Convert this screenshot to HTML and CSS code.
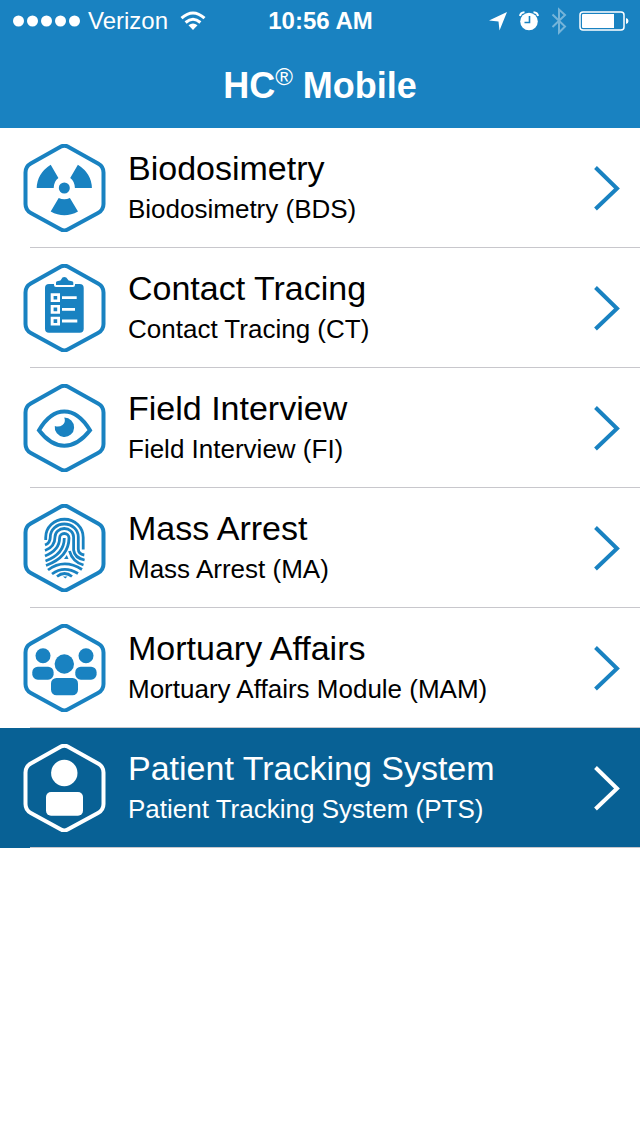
FILE: index.html
```html
<!DOCTYPE html>
<html lang="en">
<head>
<meta charset="utf-8">
<meta name="viewport" content="width=device-width">
<title>HC® Mobile</title>
<link rel="stylesheet" href="styles.css">
</head>
<body>
<svg class="defs" aria-hidden="true">
  <symbol id="hex" viewBox="0 0 88 88"><path d="M41 2.6Q44.3.8 47.6 2.6L78 19.5Q83.500 22.500 83.500 28.500V60Q83.500 66 78 69L47.600 85.600Q44.300 87.400 41 85.600L10.800 69Q5.500 66 5.500 60V28.500Q5.500 22.500 10.800 19.500Z" fill="none" stroke="currentColor" stroke-width="4"/></symbol>
  <symbol id="chevron" viewBox="0 0 28 46"><path d="M3.500 2.500 25 23.500 3.500 44" fill="none" stroke="currentColor" stroke-width="4"/></symbol>
</svg>
<header class="top">
  <div class="status">
    <div class="carrier">
      <svg class="signal" width="68" height="12" viewBox="0 0 68 12" fill="currentColor"><circle cx="6.500" cy="6" r="5.500"/><circle cx="20.500" cy="6" r="5.500"/><circle cx="34.500" cy="6" r="5.500"/><circle cx="48.500" cy="6" r="5.500"/><circle cx="62.500" cy="6" r="5.500"/></svg>
      <span>Verizon</span>
      <svg width="26" height="20" viewBox="0 0 26 20"><g fill="none" stroke="currentColor" stroke-width="3"><path d="M1.500 7.200Q13-3.200 24.500 7.200"/><path d="M5.600 11.500Q13 5 20.400 11.500"/></g><path d="M8.500 14.300Q13 10.700 17.500 14.300L13 19Z" fill="currentColor"/></svg>
    </div>
    <time class="time">10:56 AM</time>
    <div class="indicators">
      <svg width="18" height="20" viewBox="0 0 18 20"><path d="M0 9.500 18 1 10.500 19.500 9.500 10.500Z" fill="currentColor"/></svg>
      <svg width="20" height="20" viewBox="0 0 20 20"><circle cx="10" cy="10.500" r="8.800" fill="currentColor"/><path d="M1 5Q1.500 1.500 5.500 1.200M14.500 1.200Q18.500 1.500 19 5" fill="none" stroke="currentColor" stroke-width="2"/><path class="hands" d="M10.500 5v6.500H5.500" fill="none" stroke-width="1.600"/></svg>
      <svg class="bluetooth" width="16" height="28" viewBox="0 0 16 28"><path d="M1.500 7.500 14 19.500 8 25.500V2.500L14 8 1.500 20" fill="none" stroke="currentColor" stroke-width="2"/></svg>
      <svg width="50" height="20" viewBox="0 0 50 20"><rect x="1" y="1" width="44" height="18" rx="3" fill="none" stroke="currentColor" stroke-width="1.500"/><path d="M3 4q0-1 1-1H35V17H4q-1 0-1-1ZM47 7q2.500.5 2.500 3T47 13Z" fill="currentColor"/></svg>
    </div>
  </div>
  <h1 class="title">HC<sup>®</sup> Mobile</h1>
</header>
<main>
  <ul class="modules">
    <li><a class="row" href="#bds">
      <svg class="icon" viewBox="0 0 88 88"><use href="#hex"/><g fill="currentColor"><circle cx="44.300" cy="44" r="5.500"/><path d="M16.700 44Q17 29.500 30.700 20.700L38.400 34Q34 37 33.700 44ZM71.900 44Q71.600 29.500 57.900 20.700L50.200 34Q54.600 37 54.900 44ZM38.700 54Q44.300 56.500 49.900 54L58 67.500Q44.300 75 30.700 67.500Z"/></g></svg>
      <span class="text"><span class="name">Biodosimetry</span><span class="detail">Biodosimetry (BDS)</span></span>
      <svg class="chevron"><use href="#chevron"/></svg></a></li>
    <li><a class="row" href="#ct">
      <svg class="icon" viewBox="0 0 88 88"><use href="#hex"/><rect x="25" y="20" width="38.700" height="48.700" rx="4" fill="currentColor"/><path d="M34 18H55V21Q55 23 53 23H36Q34 23 34 21Z" fill="#fff"/><path d="M36 21V18.500Q36 17 38 17Q41 17 41.500 15Q42 13 44.300 13T47.500 15Q48 17 51 17Q53.300 17 53.300 18.500V21Z" fill="currentColor"/><path d="M30.700 29.300h9.300v8.700h-9.300zm2.900 2.600v3.600h3.600v-3.600zM30.700 41h9.300v8.700h-9.300zm2.900 2.600v3.600h3.600v-3.600zM30.700 52.700h9.300v8.700h-9.300zm2.900 2.600v3.600h3.600v-3.600z" fill="#fff" fill-rule="evenodd"/><path d="M42 33.700H56.700M42 45.300H55M42 57H57.300" stroke="#fff" stroke-width="2.800"/></svg>
      <span class="text"><span class="name">Contact Tracing</span><span class="detail">Contact Tracing (CT)</span></span>
      <svg class="chevron"><use href="#chevron"/></svg></a></li>
    <li><a class="row" href="#fi">
      <svg class="icon" viewBox="0 0 88 88"><use href="#hex"/><path d="M19 46.300Q30 27.500 44.300 27.500T70 46.300Q58 61.700 44.300 61.700T19 46.300Z" fill="none" stroke="currentColor" stroke-width="4"/><path d="M44.300 33.600A9.700 9.700 0 1 1 34.800 42Q39 43.500 42.500 41T44.300 33.600Z" fill="currentColor"/></svg>
      <span class="text"><span class="name">Field Interview</span><span class="detail">Field Interview (FI)</span></span>
      <svg class="chevron"><use href="#chevron"/></svg></a></li>
    <li><a class="row" href="#ma">
      <svg class="icon" viewBox="0 0 88 88"><use href="#hex"/><g fill="none" stroke="currentColor" stroke-width="2.800"><path d="M25.700 36V33.500a18.600 18.100 0 0 1 37.500 0V45.500"/><path d="M25 41Q30.300 39 30.300 33a14 13 0 0 1 28 0V45q0 5 6 6"/><path d="M25 46.500Q35 43 35 33a9.300 8.500 0 0 1 18.600 0V46q1 8 11 10"/><path d="M25 52Q39.600 46 39.600 34a4.700 4.500 0 0 1 9.400 0Q49 53 26 61.500"/><path d="M25.500 57Q44.300 50 44.300 34"/><path d="M49.500 47Q52.500 58 63.500 61"/><path d="M28 66Q44 54 62 65.500"/><path d="M32 70Q44 61 58 69.500"/><path d="M37 72.500Q44.500 66.500 52 72.500"/></g><path d="M44 55 46.800 51 48.500 55ZM43 72.500H47.500L45.300 74.500Z" fill="currentColor"/></svg>
      <span class="text"><span class="name">Mass Arrest</span><span class="detail">Mass Arrest (MA)</span></span>
      <svg class="chevron"><use href="#chevron"/></svg></a></li>
    <li><a class="row" href="#mam">
      <svg class="icon" viewBox="0 0 88 88"><use href="#hex"/><g fill="currentColor"><circle cx="23" cy="31.700" r="7.500"/><circle cx="66" cy="31.700" r="7.500"/><circle cx="44.300" cy="40" r="9.700"/><rect x="12.300" y="42.700" width="21.300" height="13" rx="5.500"/><rect x="55.300" y="42.700" width="21.300" height="13" rx="5.500"/></g><rect x="30" y="53" width="29" height="19.300" rx="6.500" fill="#fff"/><rect x="31" y="54" width="27" height="17.300" rx="5.500" fill="currentColor"/></svg>
      <span class="text"><span class="name">Mortuary Affairs</span><span class="detail">Mortuary Affairs Module (MAM)</span></span>
      <svg class="chevron"><use href="#chevron"/></svg></a></li>
    <li><a class="row selected" href="#pts" aria-current="true">
      <svg class="icon" viewBox="0 0 88 88"><use href="#hex"/><g fill="currentColor"><circle cx="44.300" cy="29" r="13.200"/><rect x="26" y="48" width="37" height="23.700" rx="5"/></g></svg>
      <span class="text"><span class="name">Patient Tracking System</span><span class="detail">Patient Tracking System (PTS)</span></span>
      <svg class="chevron"><use href="#chevron"/></svg></a></li>
  </ul>
</main>
</body>
</html>
```
FILE: styles.css
```css
body {
  margin: 0;
  background: #fff;
  color: #000;
  font-family: "Liberation Sans", Arial, sans-serif;
}
.defs { position: absolute; width: 0; height: 0; }
.top { background: #1982c1; color: #fff; }
.status {
  display: grid;
  grid-template-columns: 1fr auto 1fr;
  align-items: center;
  height: 40px;
  padding: 1px 11px 0 12px;
  box-sizing: border-box;
  font-size: 24px;
}
.carrier, .indicators { display: flex; align-items: center; gap: 12px; }
.signal { margin-right: -4px; }
.indicators { justify-content: flex-end; }
.time { font-weight: bold; }
.hands { stroke: #1982c1; }
.bluetooth { opacity: 0.4; }
.title {
  margin: 0;
  padding-top: 4px;
  font-size: 36px;
  font-weight: bold;
  line-height: 84px;
  text-align: center;
}
.title sup {
  font-size: 24px;
  font-weight: normal;
  line-height: 0;
}
.modules { margin: 0; padding: 0; list-style: none; }
.row {
  position: relative;
  display: flex;
  align-items: center;
  gap: 20px;
  box-sizing: border-box;
  min-height: 120px;
  padding: 0 20px;
  color: #000;
  text-decoration: none;
}
.row::after {
  content: "";
  position: absolute;
  left: 30px;
  right: 0;
  bottom: 0;
  height: 1px;
  background: #c8c7cc;
}
.icon { flex: none; width: 88px; height: 88px; color: #1982c1; }
.text { flex: 1; }
.name, .detail { display: block; white-space: nowrap; }
.name { font-size: 34px; line-height: 42px; }
.detail { font-size: 26px; line-height: 40px; }
.chevron { flex: none; width: 28px; height: 46px; color: #1982c1; }
.selected { background: #086195; color: #fff; }
.selected .icon, .selected .chevron { color: #fff; }
```
